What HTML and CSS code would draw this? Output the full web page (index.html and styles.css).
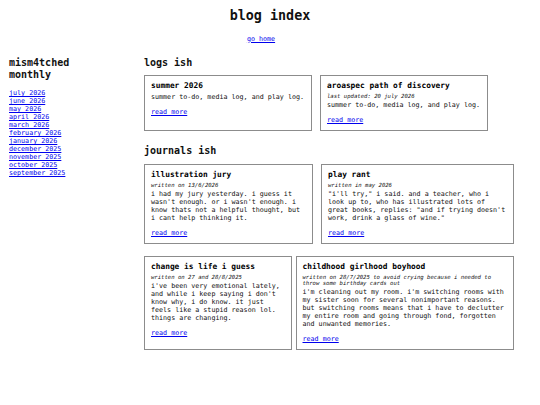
FILE: index.html
```html
<!DOCTYPE html>
<html>
<head>
<meta charset="utf-8">
<title>blog index</title>
<link rel="stylesheet" href="styles.css">
</head>
<body>
<header class="top">
  <h1 class="site-title">blog index</h1>
  <div class="home-row"><a href="#">go home</a></div>
</header>
<div class="layout">
  <aside class="sidebar">
    <h2 class="side-title">mism4tched<br>monthly</h2>
    <ul class="months">
      <li><a href="#">july 2026</a></li>
      <li><a href="#">june 2026</a></li>
      <li><a href="#">may 2026</a></li>
      <li><a href="#">april 2026</a></li>
      <li><a href="#">march 2026</a></li>
      <li><a href="#">february 2026</a></li>
      <li><a href="#">january 2026</a></li>
      <li><a href="#">december 2025</a></li>
      <li><a href="#">november 2025</a></li>
      <li><a href="#">october 2025</a></li>
      <li><a href="#">september 2025</a></li>
    </ul>
  </aside>
  <main class="main">
    <section class="section">
      <h2 class="sec-title">logs ish</h2>
      <div class="row gap8">
        <article class="card w168">
          <h3 class="card-title">summer 2026</h3>
          <p class="desc">summer to-do, media log, and play log.</p>
          <p class="more"><a href="#">read more</a></p>
        </article>
        <article class="card w168">
          <h3 class="card-title">aroaspec path of discovery</h3>
          <div class="meta">last updated: 20 july 2026</div>
          <p class="desc">summer to-do, media log, and play log.</p>
          <p class="more"><a href="#">read more</a></p>
        </article>
      </div>
    </section>
    <section class="section">
      <h2 class="sec-title">journals ish</h2>
      <div class="row gap8">
        <article class="card w169">
          <h3 class="card-title">illustration jury</h3>
          <div class="meta">written on 13/6/2026</div>
          <p class="desc">i had my jury yesterday. i guess it wasn't enough. or i wasn't enough. i know thats not a helpful thought, but i cant help thinking it.</p>
          <p class="more"><a href="#">read more</a></p>
        </article>
        <article class="card w193">
          <h3 class="card-title">play rant</h3>
          <div class="meta">written in may 2026</div>
          <p class="desc">"i'll try," i said. and a teacher, who i look up to, who has illustrated lots of great books, replies: "and if trying doesn't work, drink a glass of wine."</p>
          <p class="more"><a href="#">read more</a></p>
        </article>
      </div>
      <div class="row gap4 row-next">
        <article class="card w148">
          <h3 class="card-title">change is life i guess</h3>
          <div class="meta">written on 27 and 28/8/2025</div>
          <p class="desc">i've been very emotional lately, and while i keep saying i don't know why, i do know. it just feels like a stupid reason lol. things are changing.</p>
          <p class="more"><a href="#">read more</a></p>
        </article>
        <article class="card w218">
          <h3 class="card-title">childhood girlhood boyhood</h3>
          <div class="meta">written on 28/7/2025 to avoid crying because i needed to throw some birthday cards out</div>
          <p class="desc">i'm cleaning out my room. i'm switching rooms with my sister soon for several nonimportant reasons. but switching rooms means that i have to declutter my entire room and going through fond, forgotten and unwanted memories.</p>
          <p class="more"><a href="#">read more</a></p>
        </article>
      </div>
    </section>
  </main>
</div>
</body>
</html>
```

FILE: styles.css
```css
html, body {
  margin: 0;
  padding: 0;
  background: #fff;
}
body {
  font-family: "DejaVu Sans Mono", "Liberation Mono", monospace;
  font-size: 6.7px;
  line-height: 8px;
  color: #111;
}
a {
  color: #0000ee;
  text-decoration: underline;
}
.top {
  text-align: center;
  padding-top: 8px;
}
.site-title {
  margin: 0;
  font-size: 13.4px;
  line-height: 16px;
  font-weight: bold;
}
.home-row {
  margin-top: 10.5px;
  padding-right: 18px;
  line-height: 8px;
}
.layout {
  display: flex;
  margin-top: 14px;
}
.sidebar {
  flex: 0 0 144px;
  padding-left: 9px;
  box-sizing: border-box;
}
.side-title {
  margin: 0;
  font-size: 10px;
  line-height: 12px;
  font-weight: bold;
}
.months {
  list-style: none;
  margin: 8.7px 0 0;
  padding: 0;
}
.months li {
  line-height: 8px;
}
.main {
  flex: 0 0 372px;
}
.section + .section {
  margin-top: 14.5px;
}
.sec-title {
  margin: 0 0 6.8px;
  font-size: 10px;
  line-height: 12px;
  font-weight: bold;
}
.row {
  display: flex;
  align-items: stretch;
}
.gap8 { gap: 8px; }
.gap4 { gap: 3.5px; }
.row-next { margin-top: 12.5px; }
.card {
  flex: 0 0 auto;
  border: 1px solid #8c8c8c;
  padding: 5px 6px 6px;
  box-sizing: border-box;
}
.w168 { width: 168px; }
.w169 { width: 169px; }
.w193 { width: 193px; }
.w148 { width: 148px; }
.w218 { width: 218px; }
.card-title {
  margin: 0 0 2.5px;
  font-size: 7.85px;
  line-height: 9.2px;
  font-weight: bold;
  color: #000;
}
.meta {
  font-size: 5.6px;
  line-height: 6.5px;
  font-style: italic;
  margin-bottom: 1.3px;
}
.desc {
  margin: 0;
  line-height: 8px;
}
.more {
  margin: 7px 0 0;
  line-height: 8px;
}
```
